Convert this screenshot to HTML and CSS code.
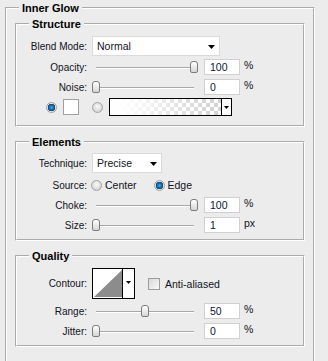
FILE: index.html
```html
<!DOCTYPE html>
<html>
<head>
	<meta charset="utf-8">
	<link rel="stylesheet" href="styles.css">
	<title>Inner Glow</title>
</head>
<body>
	<fieldset class="group outer">
		<legend>Inner Glow</legend>

		<!-- structure -->
		<fieldset class="group structure">
			<legend>Structure</legend>
			<div class="row">
				<span class="lbl">Blend Mode:</span>
				<div class="select blend"><span>Normal</span><svg class="arrow" width="7" height="4"><polygon points="0,0 7,0 3.5,4" fill="#000"/></svg></div>
			</div>
			<div class="row r1">
				<span class="lbl">Opacity:</span>
				<div class="slider"><span class="thumb" style="left:100%"></span></div>
				<div class="num">100</div><span class="unit">%</span>
			</div>
			<div class="row">
				<span class="lbl">Noise:</span>
				<div class="slider"><span class="thumb" style="left:0%"></span></div>
				<div class="num">0</div><span class="unit">%</span>
			</div>
			<div class="row colors">
				<span class="radio on"></span>
				<span class="swatch"></span>
				<span class="radio r2"></span>
				<div class="gradient">
					<span class="drop"><svg width="5" height="3"><polygon points="0,0 5,0 2.5,3" fill="#000"/></svg></span>
				</div>
			</div>
		</fieldset>

		<!-- elements -->
		<fieldset class="group elements">
			<legend>Elements</legend>
			<div class="row">
				<span class="lbl">Technique:</span>
				<div class="select technique"><span>Precise</span><svg class="arrow" width="7" height="4"><polygon points="0,0 7,0 3.5,4" fill="#000"/></svg></div>
			</div>
			<div class="row r2">
				<span class="lbl">Source:</span>
				<span class="radio first"></span><span class="opt">Center</span>
				<span class="radio on second"></span><span class="opt">Edge</span>
			</div>
			<div class="row">
				<span class="lbl">Choke:</span>
				<div class="slider"><span class="thumb" style="left:100%"></span></div>
				<div class="num">100</div><span class="unit">%</span>
			</div>
			<div class="row">
				<span class="lbl">Size:</span>
				<div class="slider"><span class="thumb" style="left:0%"></span></div>
				<div class="num">1</div><span class="unit">px</span>
			</div>
		</fieldset>

		<!-- quality -->
		<fieldset class="group quality">
			<legend>Quality</legend>
			<div class="row contour-row">
				<span class="lbl">Contour:</span>
				<svg class="contour" width="43" height="31">
					<rect x="0.5" y="0.5" width="42" height="30" fill="#fff" stroke="#000"/>
					<polygon points="2,29 30,2 30,29" fill="#8c8c8c"/>
					<line x1="30.5" y1="0" x2="30.5" y2="31" stroke="#000"/>
					<polygon points="34,13 39,13 36.5,16" fill="#000"/>
				</svg>
				<span class="check"></span><span class="opt">Anti-aliased</span>
			</div>
			<div class="row r2">
				<span class="lbl">Range:</span>
				<div class="slider"><span class="thumb" style="left:50%"></span></div>
				<div class="num">50</div><span class="unit">%</span>
			</div>
			<div class="row">
				<span class="lbl">Jitter:</span>
				<div class="slider"><span class="thumb" style="left:0%"></span></div>
				<div class="num">0</div><span class="unit">%</span>
			</div>
		</fieldset>
	</fieldset>
</body>
</html>
```
FILE: styles.css
```css
body {
	margin: 0;
	background-color: #ececec;
	font-family: "Liberation Sans", Arial, sans-serif;
	font-size: 10px;
	color: #10121c;
	overflow: hidden;
}

/* cadres en relief */
.group {
	margin: 0;
	padding: 0 0 4px 0;
	border: 2px groove #fff;
	min-width: 0;
}
.group legend {
	margin-left: 12px;
	padding: 0 3px;
	font-size: 11px;
	font-weight: bold;
	line-height: 16px;
	color: #000;
}
.outer {
	margin-left: 5px;
	width: 310px;
	box-sizing: border-box;
	padding: 0 8px 60px 8px;
}
.outer > legend {
	margin-left: 4px;
}
.structure {
	padding-top: 4px;
	padding-bottom: 8px;
}
.elements {
	margin-top: 7px;
	padding-top: 3px;
}
.quality {
	margin-top: 7px;
	padding-top: 4px;
}

.row {
	display: flex;
	align-items: center;
	height: 20px;
}
.r1 { margin-top: 1px; }
.r2 { margin-top: 2px; }
.lbl {
	flex: none;
	width: 70px;
	margin-right: 5px;
	text-align: right;
}

/* listes */
.select {
	display: flex;
	align-items: center;
	justify-content: space-between;
	box-sizing: border-box;
	height: 20px;
	padding: 0 4px 0 4px;
	background: #fff;
	border: 1px solid #dadada;
	font-size: 10.5px;
}
.blend { width: 128px; }
.technique { width: 70px; }
.arrow { margin-top: 1px; }

/* curseurs */
.slider {
	position: relative;
	flex: none;
	width: 98px;
	height: 14px;
	margin-left: 4px;
	margin-right: 10px;
}
.slider::before {
	content: "";
	position: absolute;
	left: 0; right: 0;
	top: 7px;
	border-top: 1px solid #a8a8a8;
	border-bottom: 1px solid #fff;
}
.thumb {
	position: absolute;
	top: 1px;
	width: 8px;
	height: 12px;
	margin-left: -4px;
	box-sizing: border-box;
	border: 1px solid #7c7c7c;
	border-radius: 3px 3px 2px 2px;
	background: linear-gradient(#fff, #d6d6d6);
}
.num {
	flex: none;
	width: 36px;
	height: 16px;
	box-sizing: border-box;
	padding-left: 5px;
	line-height: 14px;
	background: #fff;
	border: 1px solid #d0d0d0;
	color: #0b1736;
	font-size: 10.5px;
}
.unit {
	margin-left: 4px;
	margin-top: -4px;
	font-size: 10.5px;
}

/* boutons radio */
.radio {
	flex: none;
	width: 11px;
	height: 11px;
	box-sizing: border-box;
	border: 1px solid #a2a2a2;
	border-radius: 50%;
	background: radial-gradient(circle at 50% 40%, #fafafa, #c8c8c8);
}
.radio.on {
	background: radial-gradient(circle, #4aa3e0 0, #1466a8 2.5px, #0c3d66 3.5px, #e2e2e2 4px, #f4f4f4 6px);
}
.colors .radio.on { margin-left: 29px; }
.colors .r2 { margin-top: 0; margin-left: 13px; }
.swatch {
	flex: none;
	width: 16px;
	height: 16px;
	margin-left: 6px;
	box-sizing: border-box;
	background: #fff;
	border: 1px solid #a0a0a0;
}
.gradient {
	position: relative;
	flex: none;
	width: 123px;
	height: 18px;
	margin-left: 6px;
	box-sizing: border-box;
	border: 1px solid #000;
	background:
		linear-gradient(to right, #fff 8%, rgba(255,255,255,0) 85%),
		repeating-conic-gradient(#d4d4d4 0 25%, #fff 0 50%) 0 0 / 8px 8px;
}
.drop {
	position: absolute;
	right: 0; top: 0; bottom: 0;
	width: 9px;
	display: flex;
	align-items: center;
	justify-content: center;
	background: #fff;
	border-left: 1px solid #000;
}

.first { margin-left: -1px; }
.second { margin-left: 17px; }
.opt { margin-left: 3px; font-size: 10.5px; }

/* contour */
.contour-row { height: 31px; }
.contour { flex: none; }
.check {
	flex: none;
	width: 12px;
	height: 12px;
	margin-left: 13px;
	box-sizing: border-box;
	border: 1px solid #9c9c9c;
	background: linear-gradient(135deg, #d8d8d8, #fafafa);
}
.check + .opt { margin-left: 5px; }
```
